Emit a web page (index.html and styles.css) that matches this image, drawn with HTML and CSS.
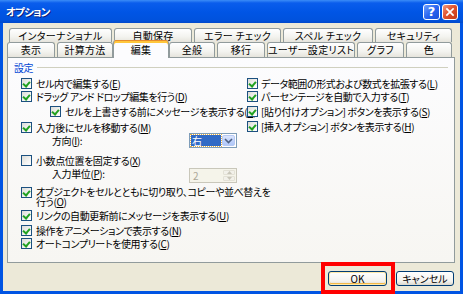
FILE: index.html
```html
<!DOCTYPE html>
<html lang="ja">
<head>
<meta charset="utf-8">
<title>オプション</title>
<link rel="stylesheet" href="styles.css">
</head>
<body>
<div class="window">
  <div class="titlebar">
    <span class="title">オプション</span>
    <div class="tbtns">
      <span class="tbtn help">?</span>
      <span class="tbtn close"><svg width="16" height="16" viewBox="0 0 16 16"><path d="M4.5 4.5 L11.5 11.5 M11.5 4.5 L4.5 11.5" stroke="#fff" stroke-width="2" stroke-linecap="square"/></svg></span>
    </div>
  </div>
  <div class="client">
    <div class="tabs">
      <div class="tabrow back">
        <div class="tab">インターナショナル</div>
        <div class="tab">自動保存</div>
        <div class="tab">エラー チェック</div>
        <div class="tab">スペル チェック</div>
        <div class="tab">セキュリティ</div>
      </div>
      <div class="tabrow front">
        <div class="tab">表示</div>
        <div class="tab">計算方法</div>
        <div class="tab sel">編集</div>
        <div class="tab">全般</div>
        <div class="tab">移行</div>
        <div class="tab">ユーザー設定リスト</div>
        <div class="tab">グラフ</div>
        <div class="tab">色</div>
      </div>
    </div>
    <div class="panel">
      <div class="group-head"><span class="group-title">設定</span><span class="group-line"></span></div>
      <div class="cols">
        <div class="col left">
          <div class="row"><span class="cb on"></span><span>セル内で編集する(<u>E</u>)</span></div>
          <div class="row"><span class="cb on"></span><span>ドラッグ アンド ドロップ編集を行う(<u>D</u>)</span></div>
          <div class="row indent"><span class="cb on"></span><span>セルを上書きする前にメッセージを表示する(<u>A</u>)</span></div>
          <div class="row"><span class="cb on"></span><span>入力後にセルを移動する(<u>M</u>)</span></div>
          <div class="row sub"><span class="sublabel">方向(<u>I</u>):</span>
            <span class="select"><span class="selval">右</span><span class="dropbtn"><svg width="9" height="6" viewBox="0 0 9 6"><path d="M1 1 L4.5 4.5 L8 1" fill="none" stroke="#4D6185" stroke-width="1.6"/></svg></span></span>
          </div>
          <div class="row"><span class="cb"></span><span>小数点位置を固定する(<u>X</u>)</span></div>
          <div class="row sub"><span class="sublabel">入力単位(<u>P</u>):</span>
            <span class="spin"><span class="spinval">2</span><span class="spinbtns">
              <span class="sb"><svg width="5" height="3" viewBox="0 0 5 3"><path d="M0 3 L2.5 0 L5 3 Z" fill="#C9C7BA"/></svg></span>
              <span class="sb"><svg width="5" height="3" viewBox="0 0 5 3"><path d="M0 0 L2.5 3 L5 0 Z" fill="#C9C7BA"/></svg></span>
            </span></span>
          </div>
          <div class="row two"><span class="cb on"></span><span class="lbl2">オブジェクトをセルとともに切り取り、コピーや並べ替えを<br>行う(<u>O</u>)</span></div>
          <div class="row"><span class="cb on"></span><span>リンクの自動更新前にメッセージを表示する(<u>U</u>)</span></div>
          <div class="row"><span class="cb on"></span><span>操作をアニメーションで表示する(<u>N</u>)</span></div>
          <div class="row"><span class="cb on"></span><span>オートコンプリートを使用する(<u>C</u>)</span></div>
        </div>
        <div class="col right">
          <div class="row"><span class="cb on"></span><span>データ範囲の形式および数式を拡張する(<u>L</u>)</span></div>
          <div class="row"><span class="cb on"></span><span>パーセンテージを自動で入力する(<u>T</u>)</span></div>
          <div class="row"><span class="cb on"></span><span>[貼り付けオプション] ボタンを表示する(<u>S</u>)</span></div>
          <div class="row"><span class="cb on"></span><span>[挿入オプション] ボタンを表示する(<u>H</u>)</span></div>
        </div>
      </div>
    </div>
    <div class="buttons">
      <button class="btn ok">OK</button>
      <button class="btn">キャンセル</button>
    </div>
  </div>
  <div class="highlight"></div>
</div>
</body>
</html>
```
FILE: styles.css
```css
html, body {
  margin: 0;
  padding: 0;
}
body {
  width: 463px;
  height: 294px;
  overflow: hidden;
  font-family: "Noto Sans CJK JP", "Noto Sans", sans-serif;
  font-size: 10px;
  font-feature-settings: "palt" 1;
  letter-spacing: -0.4px;
  color: #000;
}
.window {
  position: relative;
  width: 463px;
  height: 294px;
  background: #0054E3;
  display: flex;
  flex-direction: column;
}
.titlebar {
  height: 23px;
  flex: none;
  display: flex;
  align-items: center;
  justify-content: space-between;
  padding: 0 5px 0 6px;
  background: linear-gradient(to bottom, #3B8CF7 0px, #0A5DEC 3px, #0055E5 12px, #0052DD 20px, #0049CB 23px);
}
.title {
  color: #fff;
  font-weight: bold;
  font-size: 10.5px;
  letter-spacing: -0.8px;
  text-shadow: 1px 1px 0 #0A1F7A;
}
.tbtns {
  display: flex;
  gap: 2px;
  align-items: center;
}
.tbtn {
  width: 15px;
  height: 16px;
  box-sizing: border-box;
  border: 1px solid #fff;
  border-radius: 3px;
  display: flex;
  align-items: center;
  justify-content: center;
}
.tbtn.help {
  width: 17px;
  background: linear-gradient(135deg, #6FA0FF 0%, #2A66F0 50%, #1C4FD9 100%);
  color: #fff;
  font-family: "DejaVu Sans", sans-serif;
  font-weight: bold;
  font-size: 13px;
  line-height: 14px;
  letter-spacing: 0;
}
.tbtn.close {
  width: 16px;
  background: linear-gradient(135deg, #F09A80 0%, #E0522E 45%, #C63A17 100%);
}
.tbtn.close svg {
  width: 14px;
  height: 14px;
}
.client {
  flex: 1;
  margin: 0 3px 3px 3px;
  background: #ECE9D8;
  padding: 5px 5px 0 4px;
  display: flex;
  flex-direction: column;
}
.tabs {
  display: flex;
  flex-direction: column;
}
.tabrow {
  display: grid;
  column-gap: 2px;
}
.tabrow.back {
  margin-left: 2px;
  height: 14px;
  grid-template-columns: 103px 78px 87px 90px 77px;
}
.tabrow.front {
  height: 15px;
  grid-template-columns: 48px 56px 52px 46px 48px 88px 47px 46px;
}
.tab {
  box-sizing: border-box;
  border: 1px solid #919B9C;
  border-bottom: none;
  border-radius: 3px 3px 0 0;
  background: linear-gradient(to bottom, #FFFFFF 0%, #F3F3EF 60%, #E6E4DC 100%);
  display: flex;
  align-items: center;
  justify-content: center;
  font-size: 10px;
  line-height: 12px;
  white-space: nowrap;
  letter-spacing: 0.3px;
}
.tab.sel {
  position: relative;
  z-index: 2;
  margin: -2px -2px -1px -2px;
  background: #FCFCFE;
  border-top: none;
  box-shadow: inset 0 1px 0 #E68B2C, inset 0 3px 0 #FFC73C;
  padding-top: 1px;
}
.panel {
  position: relative;
  z-index: 1;
  box-sizing: border-box;
  height: 206px;
  border: 1px solid #919B9C;
  background: linear-gradient(to bottom, #FCFCFE 0%, #F7F6F2 100%);
  padding: 3px 6px 0 6px;
}
.group-head {
  display: flex;
  align-items: center;
  height: 13px;
  gap: 4px;
}
.group-title {
  color: #0046D5;
  font-size: 10px;
  line-height: 13px;
}
.group-line {
  flex: 1;
  height: 1px;
  background: #D0D0BF;
}
.cols {
  margin-top: 3px;
  padding-left: 7px;
  display: grid;
  grid-template-columns: 227px 1fr;
}
.col {
  display: grid;
  align-items: start;
}
.col.left {
  grid-template-rows: 12.5px 15.5px 16px 13px 20px 13px 19.75px 22.25px 15px 13px 13px;
}
.col.right {
  grid-template-rows: 13px 15px 15px 13px;
}
.row {
  display: flex;
  align-items: center;
  height: 13px;
  line-height: 13px;
  white-space: nowrap;
  gap: 4px;
}
.col.right .row {
  gap: 3px;
  margin-left: -1px;
}
.row.indent {
  padding-left: 29px;
}
.row.sub {
  padding-left: 31px;
  gap: 0;
}
.row.two {
  height: 20px;
  align-items: flex-start;
}
.lbl2 {
  line-height: 10px;
}
.sublabel {
  width: 137px;
}
.cb {
  flex: none;
  width: 11px;
  height: 11px;
  box-sizing: border-box;
  border: 1px solid #1C5180;
  background: linear-gradient(135deg, #DCDCD7 0%, #F4F4F2 60%, #FFFFFF 100%);
  position: relative;
}
.cb.on::after {
  content: "";
  position: absolute;
  left: 2px;
  top: 1px;
  width: 3px;
  height: 5px;
  border-right: 2px solid #21A121;
  border-bottom: 2px solid #21A121;
  transform: rotate(40deg);
  transform-origin: center;
}
u {
  text-decoration: underline;
  text-underline-offset: 1px;
}
.select {
  display: flex;
  align-items: center;
  box-sizing: border-box;
  width: 48px;
  height: 15px;
  border: 1px solid #7F9DB9;
  background: #fff;
  padding: 1px;
  gap: 1px;
}
.selval {
  flex: 1;
  height: 11px;
  background: #316AC5;
  color: #fff;
  line-height: 11px;
  padding-left: 1px;
  outline: 1px dotted #E8B040;
}
.dropbtn {
  width: 13px;
  height: 11px;
  box-sizing: border-box;
  border: 1px solid #B6C9F4;
  border-radius: 2px;
  background: linear-gradient(to bottom, #DDE6FD 0%, #C1D3FB 50%, #B0C7F8 100%);
  display: flex;
  align-items: center;
  justify-content: center;
}
.spin {
  display: flex;
  align-items: center;
  box-sizing: border-box;
  width: 48px;
  height: 15px;
  margin-top: 3px;
  border: 1px solid #C9C7BA;
  background: #F5F4EA;
  padding: 1px;
}
.spinval {
  flex: 1;
  color: #ACA899;
  line-height: 11px;
  padding-left: 2px;
}
.spinbtns {
  width: 12px;
  height: 11px;
  display: flex;
  flex-direction: column;
  gap: 1px;
}
.sb {
  flex: 1;
  box-sizing: border-box;
  border: 1px solid #E3E1D6;
  border-radius: 1px;
  background: #F2F1EA;
  display: flex;
  align-items: center;
  justify-content: center;
}
.buttons {
  display: flex;
  justify-content: flex-end;
  gap: 9px;
  margin-top: 8px;
  padding-right: 1px;
}
.btn {
  box-sizing: border-box;
  height: 15px;
  width: 58px;
  padding: 0;
  border: 1px solid #003C74;
  border-radius: 3px;
  background: linear-gradient(to bottom, #FFFFFF 0%, #F3F2EE 70%, #DCD8CD 100%);
  font-family: "Noto Sans CJK JP", "Noto Sans", sans-serif;
  font-feature-settings: "palt" 1;
  font-size: 10px;
  line-height: 12px;
  color: #000;
}
.btn.ok {
  width: 59px;
  box-shadow: inset 0 0 0 1px #FFE9A8, inset 0 -1px 0 1px #F2B84A;
}
.highlight {
  position: absolute;
  left: 321px;
  top: 262px;
  width: 74px;
  height: 32px;
  box-sizing: border-box;
  border: 4px solid #FF0000;
  z-index: 5;
}
```
